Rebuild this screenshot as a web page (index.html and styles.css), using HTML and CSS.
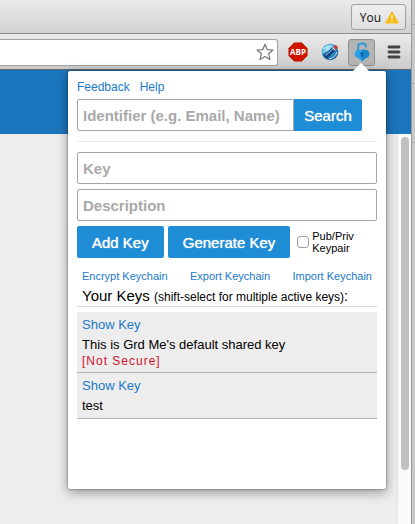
FILE: index.html
```html
<!DOCTYPE html>
<html lang="en">
<head>
<meta charset="utf-8">
<title>Grd Me</title>
<link rel="stylesheet" href="styles.css">
</head>
<body>
<div class="desktop">
  <div class="window">
    <header class="tabstrip">
      <button class="profile" type="button">You
        <svg width="14" height="13" viewBox="0 0 14 13" aria-hidden="true"><path d="M7 1 13.2 12H.8Z" fill="#fbb917" stroke="#fbb917" stroke-width="1.2" stroke-linejoin="round"/><path d="M7 4.2v4M7 9.4v1.4" stroke="#fff" stroke-width="1.3"/></svg>
      </button>
    </header>
    <div class="toolbar">
      <div class="omnibox">
        <input class="address" type="text" aria-label="Address">
        <button class="star" type="button" aria-label="Bookmark">
          <svg width="18" height="18" viewBox="0 0 18 18"><path d="M9 1.2 11.2 6.600 17 7 12.600 10.800 14 16.600 9 13.500 4 16.600 5.400 10.800 1 7 6.800 6.600Z" fill="#fff" stroke="#777" stroke-width="1.200" stroke-linejoin="round"/></svg>
        </button>
      </div>
      <button class="ext" type="button" aria-label="Adblock">
        <svg width="20" height="20" viewBox="0 0 20 20"><path d="M6.200.8h7.600l5.400 5.400v7.600l-5.400 5.400H6.200L.8 13.800V6.200Z" fill="#cf1500" stroke="#b81200" stroke-width=".6"/><text class="abp" x="10" y="13" text-anchor="middle">ABP</text></svg>
      </button>
      <button class="ext globe" type="button" aria-label="Web tool">
        <svg width="18" height="18" viewBox="0 0 18 18">
          <defs><radialGradient id="ball" cx=".4" cy=".3" r=".75"><stop offset="0" stop-color="#b9ecfa"/><stop offset=".45" stop-color="#3aa4d4"/><stop offset="1" stop-color="#0d4d8e"/></radialGradient></defs>
          <circle cx="9" cy="9" r="8.300" fill="url(#ball)"/>
          <path d="M2 6Q7 2 12 3M1 10Q4 6 8 6M8 16Q14 15 16 9" fill="none" stroke="#c5effa" stroke-width="1"/>
          <path d="M4 14 14 5" stroke="#173c78" stroke-width="4.600"/>
          <path d="M4.500 12.500 12 5.800" stroke="#5b9ed6" stroke-width="1.500"/>
          <path d="M12.500 6.300 13.500 5.400" stroke="#e6eef4" stroke-width="4.200"/>
          <path d="M13.500 5.400 16 3.200" stroke="#c93c42" stroke-width="3.600"/>
        </svg>
      </button>
      <button class="ext active" type="button" aria-label="Grd Me">
        <svg width="18" height="20" viewBox="0 0 18 20">
          <path d="M5.200 9V3.800Q5.200 1.500 9 1.500T12.800 3.800V5.500" fill="none" stroke="#2b96da" stroke-width="1.900"/>
          <path d="M3 8.500Q9 6.800 15 8.500L16.500 12Q16 15.500 12.500 16.200L9 19.500 5.500 16.200Q2 15.500 1.500 12Z" fill="#2ba0e6"/>
          <path d="M9 7.600Q12 7.600 15 8.500L16.500 12Q16 15.500 12.500 16.200L9 19.500Z" fill="#1a86cd"/>
          <path d="M9 10a1.600 1.600 0 0 1 .8 3V15.500H8.200V13A1.600 1.600 0 0 1 9 10Z" fill="#0d609f"/>
        </svg>
      </button>
      <button class="menu" type="button" aria-label="Menu">
        <svg width="14" height="14" viewBox="0 0 14 14"><path d="M2 2h10M2 7h10M2 12h10" stroke="#444" stroke-width="2.800" stroke-linecap="round"/></svg>
      </button>
    </div>
    <main class="page">
      <div class="banner"></div>
      <div class="content"><div class="track"><div class="thumb"></div></div></div>
    </main>

    <section class="popup">
      <nav class="top-links"><a href="#">Feedback</a><a href="#">Help</a></nav>
      <form class="search">
        <input class="field" type="text" placeholder="Identifier (e.g. Email, Name)" aria-label="Identifier">
        <button class="btn" type="button">Search</button>
      </form>
      <form class="add">
        <input class="field" type="text" placeholder="Key" aria-label="Key">
        <input class="field" type="text" placeholder="Description" aria-label="Description">
        <div class="actions">
          <button class="btn" type="button">Add Key</button>
          <button class="btn" type="button">Generate Key</button>
          <label class="pair"><input class="tick" type="checkbox"><span>Pub/Priv<br>Keypair</span></label>
        </div>
      </form>
      <nav class="chain-links"><a href="#">Encrypt Keychain</a><a href="#">Export Keychain</a><a href="#">Import Keychain</a></nav>
      <h2 class="heading">Your Keys <small>(shift-select for multiple active keys)</small>:</h2>
      <ul class="keys">
        <li class="key"><a href="#">Show Key</a><p>This is Grd Me's default shared key</p><p class="warn">[Not Secure]</p></li>
        <li class="key"><a href="#">Show Key</a><p>test</p></li>
      </ul>
    </section>
  </div>
  <aside class="behind"><i></i><i></i><i></i></aside>
</div>
</body>
</html>
```
FILE: styles.css
```css
* { box-sizing: border-box; }

body {
  margin: 0;
  font-family: "Liberation Sans", Arial, sans-serif;
  color: #000;
}

button { font-family: inherit; cursor: pointer; }
a { color: #2079ca; text-decoration: none; }

.desktop { display: flex; min-height: 100vh; }

.window {
  position: relative;
  flex: 1;
  display: flex;
  flex-direction: column;
}

/* Browser frame */
.tabstrip {
  display: flex;
  justify-content: flex-end;
  height: 34px;
  padding: 4px 5px 0 0;
  background: linear-gradient(#e9e9e9, #d3d3d3);
  border-bottom: 1px solid #8b8b8b;
}

.profile {
  display: flex;
  align-items: center;
  gap: 4px;
  height: 26px;
  padding: 0 6px 0 8px;
  border: 1px solid #a0a0a0;
  border-radius: 3px;
  background: linear-gradient(#eee, #e0e0e0);
  font: 12px "Open Sans", sans-serif;
  color: #111;
}

.toolbar {
  display: flex;
  align-items: center;
  height: 36px;
  padding: 1px 10px 0 0;
  background: linear-gradient(#ebebeb, #cbcbcb);
  border-bottom: 1px solid #686868;
}

.omnibox {
  flex: 1;
  display: flex;
  align-items: center;
  height: 27px;
  margin-right: 10px;
  padding-right: 3px;
  border: 1px solid #a3a3a3;
  border-left: 0;
  border-radius: 0 3px 3px 0;
  background: #fff;
}

.address {
  flex: 1;
  min-width: 0;
  border: 0;
  outline: 0;
  background: none;
}

.star, .ext, .menu {
  display: flex;
  align-items: center;
  justify-content: center;
  padding: 0;
  border: 0;
  background: none;
}

.ext { width: 20px; height: 27px; }
.ext.globe { width: 18px; margin: 0 9px 0 13px; }

.ext.active {
  width: 27px;
  border: 1px solid #909090;
  border-radius: 3px;
  background: #b4b4b4;
}

.menu { width: 14px; margin-left: 12px; }

.abp { font: bold 8px "Open Sans", sans-serif; fill: #fff; }

/* Web page under the popup */
.page {
  flex: 1;
  display: flex;
  flex-direction: column;
  background: #ededed;
}

.banner { height: 64px; background: #1b75bc; }

.content { flex: 1; display: flex; justify-content: flex-end; }

.track {
  width: 14px;
  padding: 3px 2px 0 2px;
  background: #fafafa;
  border-left: 1px solid #e3e3e3;
}

.thumb {
  width: 8px;
  height: 86%;
  margin: 0 auto;
  border-radius: 4px;
  background: #c1c1c1;
}

.behind {
  display: flex;
  flex-direction: column;
  gap: 58px;
  width: 4px;
  padding-top: 24px;
  background: #c8c8c8;
  border-left: 1px solid #999;
}

.behind i { height: 1px; background: #aaa; }

/* Extension popup */
.popup {
  position: absolute;
  top: 71px;
  right: 25px;
  width: 318px;
  min-height: 418px;
  padding: 9px;
  border-radius: 2px;
  background: #fff;
  box-shadow: 0 3px 12px rgba(0, 0, 0, .4), 0 0 2px rgba(0, 0, 0, .6);
}

.popup::before {
  content: "";
  position: absolute;
  top: -8px;
  right: 17px;
  border: 8px solid transparent;
  border-top: 0;
  border-bottom-color: #fff;
}

.top-links {
  display: flex;
  gap: 10px;
  font-size: 12px;
  line-height: 14px;
  margin-bottom: 5px;
}

.search {
  display: flex;
  padding-bottom: 10px;
  border-bottom: 1px solid #ebebeb;
}

.field {
  width: 100%;
  height: 32px;
  padding: 0 5px;
  border: 1px solid #a6a6a6;
  border-radius: 2px;
  background: #fff;
  font: bold 15px "Liberation Sans", Arial, sans-serif;
}

.field::placeholder { color: #a9a9a9; opacity: 1; }

.search .field { width: 217px; border-radius: 2px 0 0 2px; }
.search .btn { width: 68px; padding: 0; border-radius: 0 2px 2px 0; }

.btn {
  height: 32px;
  padding: 0 15px;
  border: 0;
  border-radius: 2px;
  background: #1f8dd6;
  color: #fff;
  font-size: 15px;
  text-shadow: 0 0 1px #fff;
}

.add {
  display: flex;
  flex-direction: column;
  gap: 5px;
  padding-top: 10px;
}

.actions { display: flex; align-items: center; gap: 4px; }

.pair {
  display: flex;
  align-items: center;
  gap: 3px;
  margin-left: 3px;
  font-size: 11px;
  line-height: 12px;
}

.tick {
  appearance: none;
  width: 12px;
  height: 12px;
  margin: 0;
  border: 1px solid #a0a0a0;
  border-radius: 3px;
  background: #fff;
}

.tick:checked { background: #1f8dd6; }

.chain-links {
  display: flex;
  justify-content: space-between;
  padding: 12px 5px 0;
  font-size: 11px;
  line-height: 12px;
}

.heading {
  margin: 0 0 5px;
  padding: 5px 5px 0;
  border-bottom: 1px solid #d6d6d6;
  font-size: 15px;
  font-weight: normal;
  line-height: 17px;
}

.heading small { font-size: 12px; }

.keys { margin: 0; padding: 0; list-style: none; }

.key {
  padding: 4px 5px 3px;
  border-bottom: 1px solid #b5b5b5;
  background: #ededed;
  font-size: 13px;
  line-height: 18px;
}

.key a { display: block; }
.key p { margin: 2px 0 0; }

.key .warn {
  margin: 0;
  color: #d0142c;
  font-size: 12px;
  line-height: 15px;
  letter-spacing: 1px;
}
```
